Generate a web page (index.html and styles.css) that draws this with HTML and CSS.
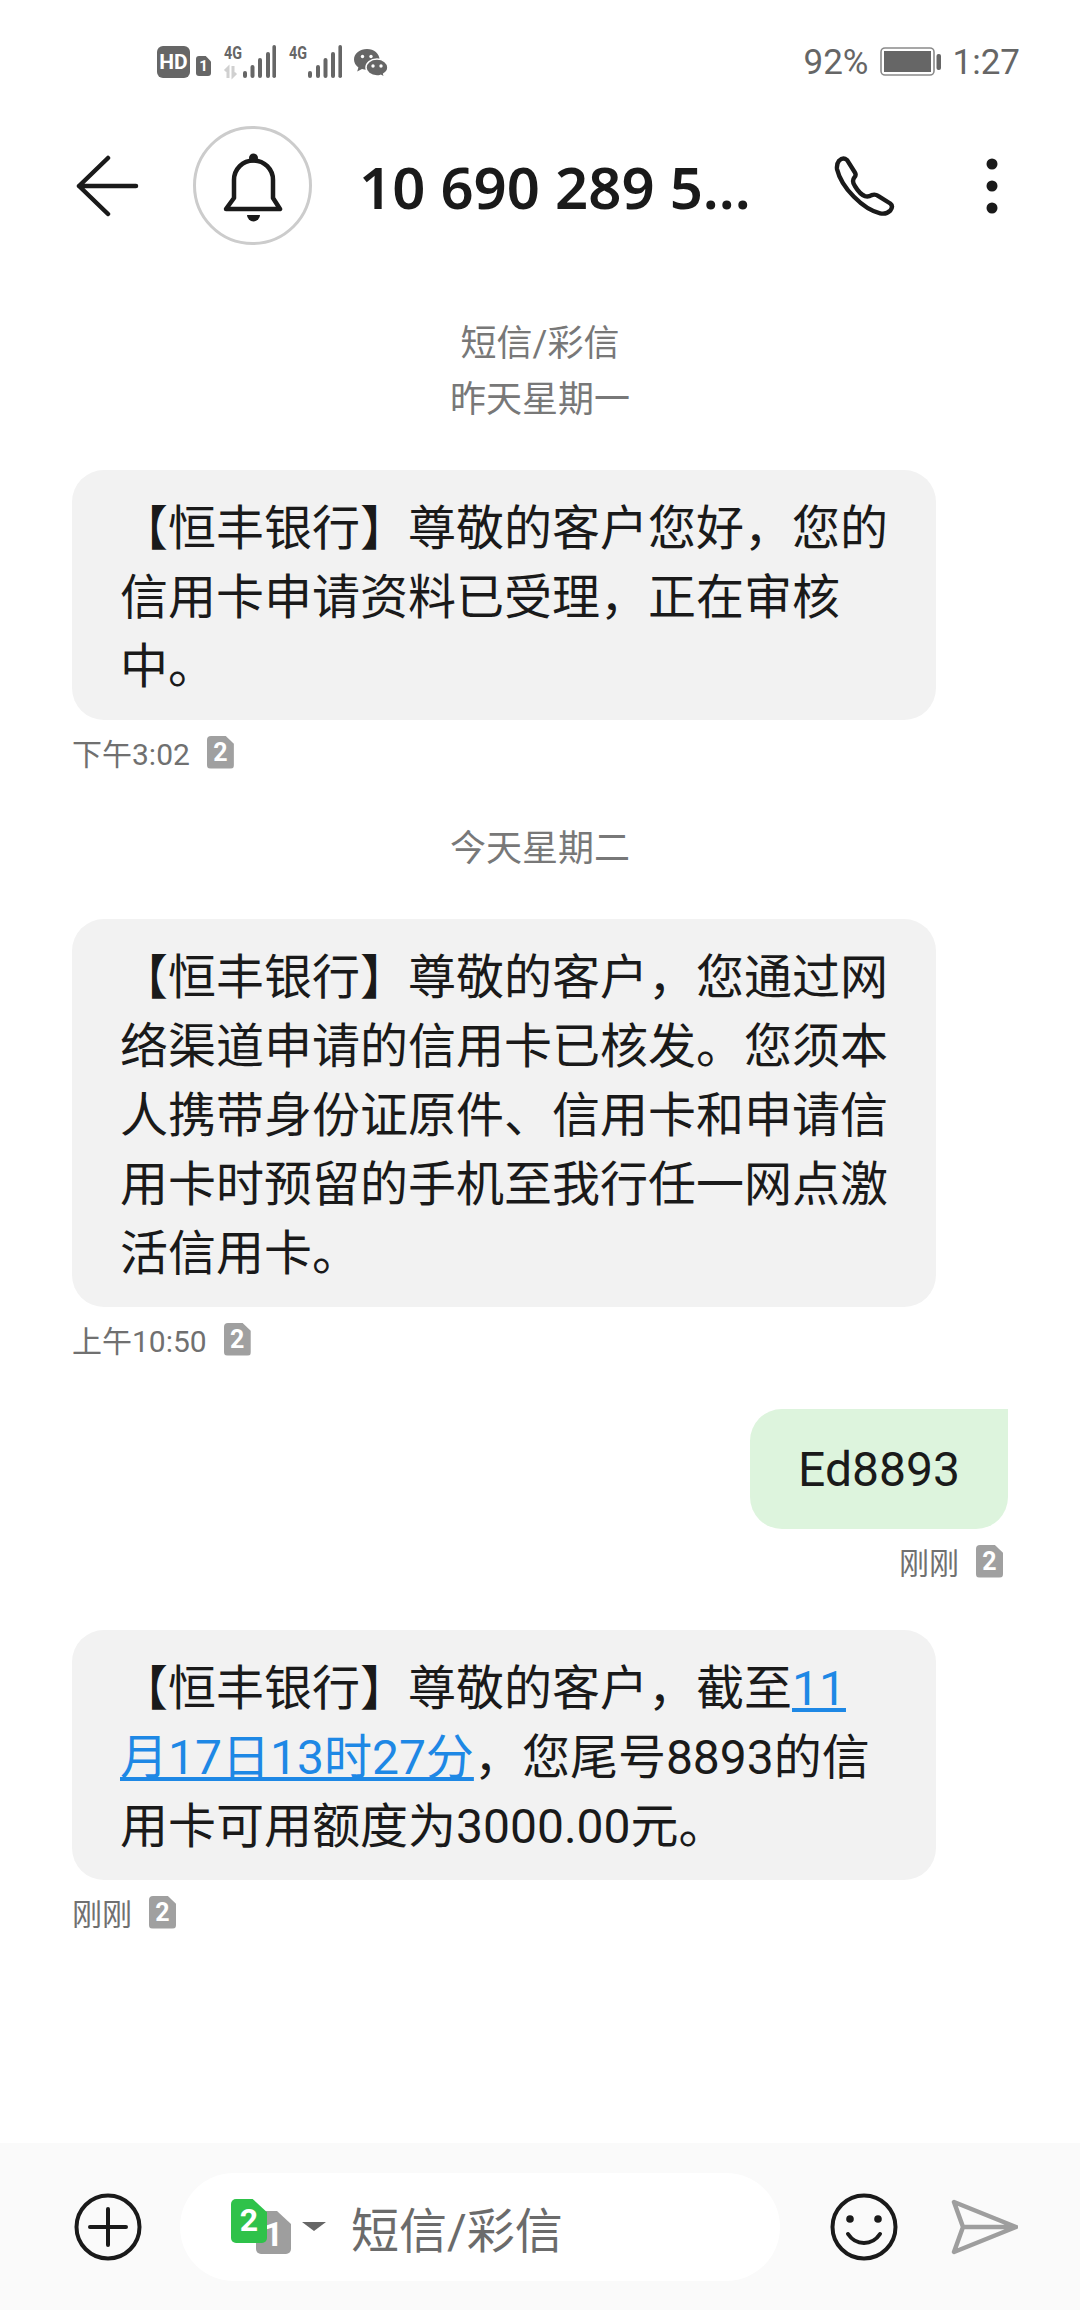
FILE: index.html
```html
<!DOCTYPE html>
<html lang="zh-CN">
<head>
<meta charset="utf-8">
<title>短信</title>
<link rel="stylesheet" href="styles.css">
</head>
<body>
<div class="screen">
  <div class="status">
    <div class="status-left">
      <svg class="ic-hd" width="33" height="32" viewBox="0 0 33 32"><rect width="33" height="32" rx="6" fill="#666"/><text x="16.5" y="23" text-anchor="middle" class="hd-text">HD</text></svg>
      <div class="mini-chip">1</div>
      <svg class="ic-sig" width="52" height="34" viewBox="0 0 52 34">
        <text x="0" y="14" class="g-text" textLength="18" lengthAdjust="spacingAndGlyphs">4G</text>
        <path d="M4 33v-10l-3 3M9 21v10l3-3" fill="none" stroke="#d0d0d0" stroke-width="3"/>
        <g fill="#666"><rect x="19" y="26" width="4" height="7" rx="2"/><rect x="26.500" y="20" width="4" height="13" rx="2"/><rect x="34" y="13" width="4" height="20" rx="2"/><rect x="42" y="7" width="4" height="26" rx="2"/><rect x="48.400" y="0" width="3.600" height="33" rx="1.800"/></g>
      </svg>
      <svg class="ic-sig" width="53" height="34" viewBox="0 0 53 34">
        <text x="0" y="14" class="g-text" textLength="18" lengthAdjust="spacingAndGlyphs">4G</text>
        <g fill="#666"><rect x="19" y="26" width="4" height="7" rx="2"/><rect x="27" y="20" width="4" height="13" rx="2"/><rect x="34.500" y="13" width="4" height="20" rx="2"/><rect x="42" y="7" width="4" height="26" rx="2"/><rect x="49.400" y="0" width="3.600" height="33" rx="1.800"/></g>
      </svg>
      <svg class="ic-wx" width="34" height="29" viewBox="0 0 34 29">
        <path d="M13 0C6 0 0 4.500 0 10.500c0 3.200 1.700 6 4.400 8L3.200 22.500l4.800-2.400c1.500.5 3.200.8 5 .8 7 0 12.500-4.700 12.500-10.400S20 0 13 0z" fill="#666"/>
        <path d="M23 10C16.500 10 12 14 12 18.500S16.500 27 23 27c1.300 0 2.600-.2 3.700-.6l4 2-1-3.400c2.600-1.600 4.200-4 4.200-6.500C33.900 14 29.400 10 23 10z" fill="#666" stroke="#fff" stroke-width="1.500"/>
        <circle cx="8.500" cy="7.500" r="1.700" fill="#fff"/><circle cx="17" cy="7.500" r="1.700" fill="#fff"/>
        <circle cx="19" cy="17" r="1.700" fill="#fff"/><circle cx="27" cy="17" r="1.700" fill="#fff"/>
      </svg>
    </div>
    <div class="status-right">
      <span>92%</span>
      <svg width="62" height="30" viewBox="0 0 62 30"><rect x="1" y="1" width="53" height="27" rx="4" fill="none" stroke="#8a8a8a" stroke-width="1.600"/><rect x="4" y="4" width="47" height="21" fill="#666"/><rect x="56.500" y="7" width="4.500" height="16" rx="2" fill="#666"/></svg>
      <span>1:27</span>
    </div>
  </div>

  <header class="appbar">
    <svg class="ic-back" width="64" height="64" viewBox="0 0 64 64"><path d="M32 4 3 32l29 28M3 32h57" fill="none" stroke="#1a1a1a" stroke-width="4.500" stroke-linecap="round" stroke-linejoin="round"/></svg>
    <div class="avatar">
      <svg width="60" height="72" viewBox="0 0 60 72"><path d="M3 57l8-11V28a19.500 19.500 0 0 1 39 0v18l7 11z" fill="none" stroke="#1a1a1a" stroke-width="4.500" stroke-linejoin="round"/><circle cx="30.500" cy="6" r="4.500" fill="#1a1a1a"/><path d="M24 63h13a6.500 6.500 0 0 1-13 0z" fill="#1a1a1a"/></svg>
    </div>
    <h1 class="title">10 690 289 5...</h1>
    <svg class="ic-phone" width="64" height="64" viewBox="100 70 190 190"><path d="M118 90Q130 78 142 88L165 125Q170 133 163 140Q155 150 165 165Q180 190 195 195Q205 198 215 192Q225 188 235 195L270 217Q280 225 270 238Q258 250 240 246C190 235 125 170 112 115Q110 100 118 90Z" fill="none" stroke="#1a1a1a" stroke-width="13" stroke-linejoin="round"/></svg>
    <svg class="ic-more" width="12" height="56" viewBox="0 0 12 56"><circle cx="6" cy="6" r="5.500" fill="#1a1a1a"/><circle cx="6" cy="28" r="5.500" fill="#1a1a1a"/><circle cx="6" cy="50" r="5.500" fill="#1a1a1a"/></svg>
  </header>

  <main class="thread">
    <div class="date first">短信/彩信<br>昨天星期一</div>
    <div class="bubble in">【恒丰银行】尊敬的客户您好，您的信用卡申请资料已受理，正在审核中。</div>
    <div class="meta"><span>下午3:02</span><span class="chip">2</span></div>

    <div class="date">今天星期二</div>
    <div class="bubble in">【恒丰银行】尊敬的客户，您通过网络渠道申请的信用卡已核发。您须本人携带身份证原件、信用卡和申请信用卡时预留的手机至我行任一网点激活信用卡。</div>
    <div class="meta"><span>上午10:50</span><span class="chip">2</span></div>

    <div class="bubble out">Ed8893</div>
    <div class="meta right"><span>刚刚</span><span class="chip">2</span></div>

    <div class="bubble in next">【恒丰银行】尊敬的客户，截至<a class="link">11月17日13时27分</a>，您尾号8893的信用卡可用额度为3000.00元。</div>
    <div class="meta"><span>刚刚</span><span class="chip">2</span></div>
  </main>

  <footer class="composer">
    <svg width="68" height="68" viewBox="0 0 68 68"><circle cx="34" cy="34" r="31.500" fill="none" stroke="#1a1a1a" stroke-width="4"/><path d="M16 34h36M34 16v36" stroke="#1a1a1a" stroke-width="4" stroke-linecap="round"/></svg>
    <div class="input">
      <div class="sims">
        <div class="sim sim-gray">1</div>
        <div class="sim sim-green">2</div>
      </div>
      <svg class="caret" width="24" height="9" viewBox="0 0 24 9"><path d="M0 0h24L12 9z" fill="#666"/></svg>
      <span class="placeholder">短信/彩信</span>
    </div>
    <svg class="ic-smile" width="68" height="68" viewBox="0 0 68 68"><circle cx="34" cy="34" r="31.500" fill="none" stroke="#1a1a1a" stroke-width="4"/><circle cx="20" cy="26" r="3.800" fill="#1a1a1a"/><circle cx="48" cy="26" r="3.800" fill="#1a1a1a"/><path d="M18 41c4 6 10 9 16 9s12-3 16-9" fill="none" stroke="#1a1a1a" stroke-width="4" stroke-linecap="round"/></svg>
    <svg class="ic-send" width="68" height="56" viewBox="0 0 68 56"><path d="M4 3 66 28 4 53 13 28zM13 28h53" fill="none" stroke="#9e9e9e" stroke-width="4.500" stroke-linejoin="round" stroke-linecap="round"/></svg>
  </footer>
</div>
</body>
</html>
```

FILE: styles.css
```css
* { box-sizing: border-box; }
html, body { margin: 0; padding: 0; background: #fff; }
body { font-family: Roboto, "Noto Sans CJK SC", sans-serif; color: #1a1a1a; }
.screen { width: 1080px; height: 2310px; display: flex; flex-direction: column; overflow: hidden; }

.status { height: 124px; flex: none; display: flex; justify-content: space-between; align-items: center; padding: 0 60px 0 157px; color: #666; }
.status-left { display: flex; align-items: center; }
.status-right { display: flex; align-items: center; gap: 11px; font-size: 35px; }
.ic-hd { margin-right: 6px; }
.hd-text { font: 700 21px Roboto, sans-serif; fill: #fff; }
.g-text { font: 700 18px Roboto, sans-serif; fill: #666; }
.mini-chip { width: 15px; height: 20px; margin: 8px 13px 0 0; background: #666; border-radius: 3px; color: #fff; font: 700 15px/20px Roboto, sans-serif; text-align: center; clip-path: polygon(0 0, 65% 0, 100% 28%, 100% 100%, 0 100%); }
.ic-sig { margin-right: 13px; overflow: visible; }
.ic-wx { margin-left: -1px; margin-top: 3px; }

.appbar { height: 124px; flex: none; display: flex; align-items: center; padding-left: 76px; }
.avatar { width: 119px; height: 119px; margin: 0 0 1px 53px; border: 3px solid #ccc; border-radius: 50%; display: flex; align-items: center; justify-content: center; flex: none; }
.avatar svg { margin-top: 4px; }
.title { width: 474px; margin: 0 0 0 47px; font: 600 58px "Noto Sans", sans-serif; color: #1a1a1a; white-space: nowrap; }
.ic-more { margin-left: 89px; }

.thread { flex: 1; padding: 68px 72px 0; display: flex; flex-direction: column; }
.date { font-size: 36px; line-height: 56px; color: #787878; text-align: center; margin-bottom: 42px; margin-top: 52px; }
.date.first { margin-top: 0; }
.bubble { font-size: 48px; line-height: 69px; }
.bubble.in { width: 864px; padding: 24px 48px 19px; background: #f2f2f2; border-radius: 32px; }
.bubble.out { align-self: flex-end; width: 258px; height: 120px; margin-top: 53px; display: flex; align-items: center; justify-content: center; background: #ddf4dd; border-radius: 32px 0 32px 32px; }
.bubble.next { margin-top: 52px; }
.link { color: #1e88e5; text-decoration: underline; }
.meta { display: flex; align-items: center; gap: 17px; height: 34px; margin-top: 15px; font-size: 30px; color: #707070; }
.meta.right { justify-content: flex-end; margin-right: 5px; }
.chip { width: 27px; height: 33px; background: #a0a0a0; border-radius: 4px; color: #fff; font: 700 25px/33px Roboto, sans-serif; text-align: center; clip-path: polygon(0 0, 68% 0, 100% 25%, 100% 100%, 0 100%); }

.composer { height: 167px; flex: none; background: #fafafa; display: flex; align-items: center; padding-left: 74px; }
.input { width: 600px; height: 108px; margin-left: 38px; background: #fff; border-radius: 54px; display: flex; align-items: center; padding-left: 51px; }
.sims { position: relative; width: 60px; height: 55px; flex: none; }
.sim { position: absolute; color: #fff; text-align: center; font-family: Roboto, sans-serif; font-weight: 700; border-radius: 5px; }
.sim-gray { left: 25px; top: 12px; width: 35px; height: 43px; background: #9e9e9e; font-size: 34px; line-height: 46px; clip-path: polygon(0 0, 60% 0, 100% 30%, 100% 100%, 0 100%); }
.sim-green { left: 0; top: 0; width: 36px; height: 44px; background: #2fc24a; font-size: 32px; line-height: 42px; clip-path: polygon(0 0, 60% 0, 100% 30%, 100% 100%, 0 100%); }
.caret { margin-left: 11px; flex: none; }
.placeholder { margin-left: 25px; font-size: 48px; color: #6b6b6b; }
.ic-smile { margin-left: 50px; }
.ic-send { margin-left: 52px; }
```
